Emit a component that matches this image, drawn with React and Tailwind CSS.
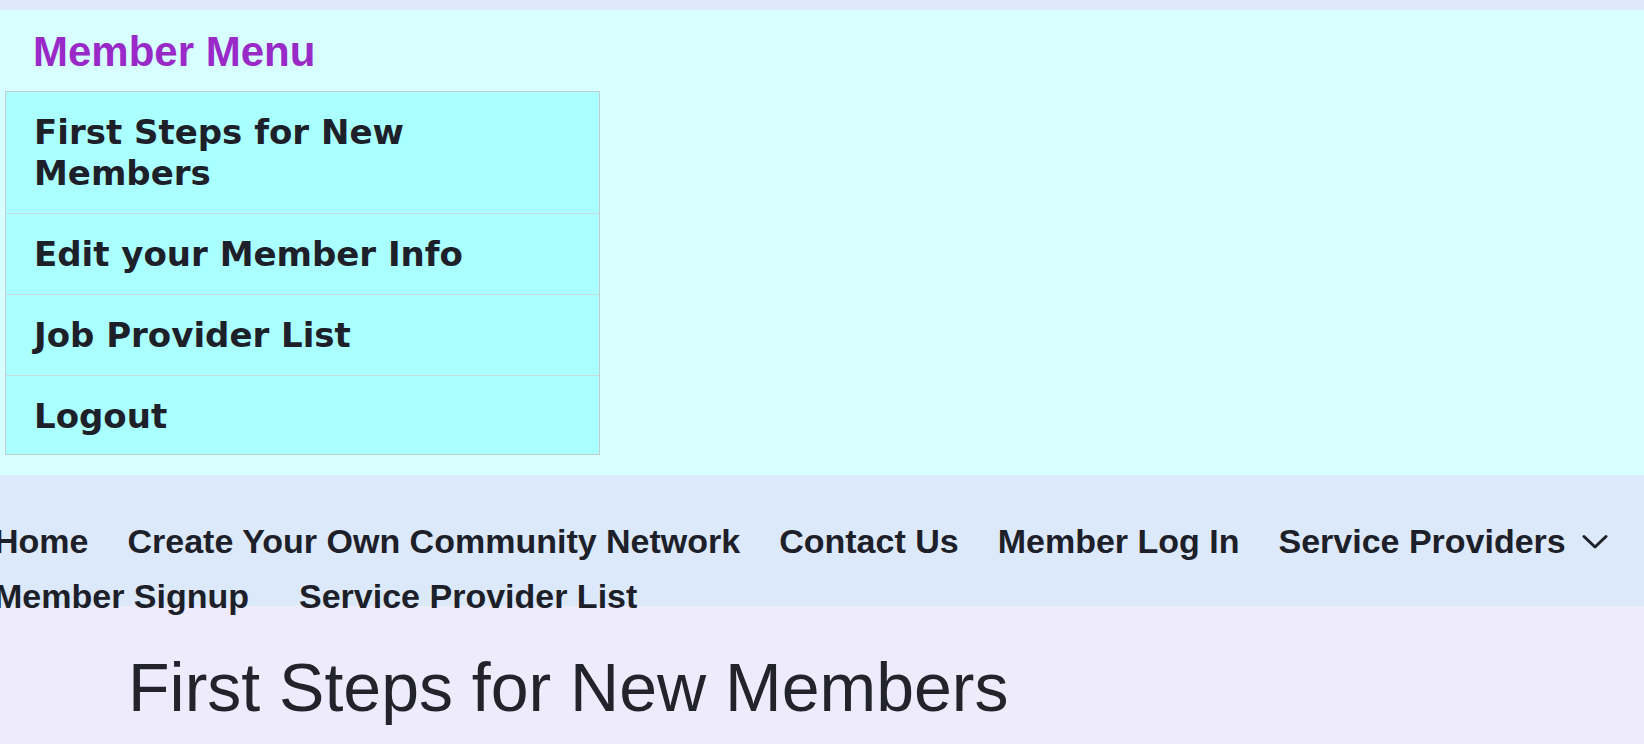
import React from "react";

const menuItems = [
  "First Steps for New Members",
  "Edit your Member Info",
  "Job Provider List",
  "Logout",
];

function Chevron() {
  return (
    <svg width="26" height="16" viewBox="0 0 26 16" fill="none" className="ml-[16px] mt-[2px]">
      <polyline points="2,2.5 13,13 24,2.5" stroke="#1f2128" strokeWidth="3" strokeLinecap="round" strokeLinejoin="round" />
    </svg>
  );
}

export default function App() {
  return (
    <div className="min-h-[744px] bg-[#eeebfd] font-['Liberation_Sans',Arial,sans-serif]">
      <div className="h-[10px] bg-[#dde9fb]" />

      <section className="bg-[#d7ffff] pt-[18px] pb-[20px]">
        <h2 className="pl-[33px] text-[42px] font-bold leading-[48px] text-[#9a2ac8]">
          Member Menu
        </h2>
        <ul className="mt-[15px] ml-[5px] w-[595px] border border-[#c2cccc] bg-[#aaffff] font-['DejaVu_Sans',sans-serif] text-[34px] font-bold leading-[41px] text-[#1d2029]">
          {menuItems.map((item, i) => (
            <li
              key={item}
              className={
                "px-[28px] " +
                (i === menuItems.length - 1 ? "pt-[19.5px] pb-[17px] " : "py-[19.5px] ") +
                (i > 0 ? "border-t border-[#c6dede]" : "")
              }
            >
              {item}
            </li>
          ))}
        </ul>
      </section>

      <nav className="h-[131px] bg-[#dce9fb] pt-[47px] text-[34px] font-bold leading-[39px] text-[#1d2029]">
        <div className="ml-[-6px] flex items-center gap-[39px]">
          <span>Home</span>
          <span>Create Your Own Community Network</span>
          <span>Contact Us</span>
          <span>Member Log In</span>
          <span className="flex items-center">
            Service Providers
            <Chevron />
          </span>
        </div>
        <div className="mt-[16px] ml-[-6px] flex items-center gap-[50px]">
          <span>Member Signup</span>
          <span>Service Provider List</span>
        </div>
      </nav>

      <main className="pl-[128px] pt-[42px]">
        <h1 className="text-[68px] font-normal leading-[78px] text-[#22232b]">
          First Steps for New Members
        </h1>
      </main>
    </div>
  );
}
